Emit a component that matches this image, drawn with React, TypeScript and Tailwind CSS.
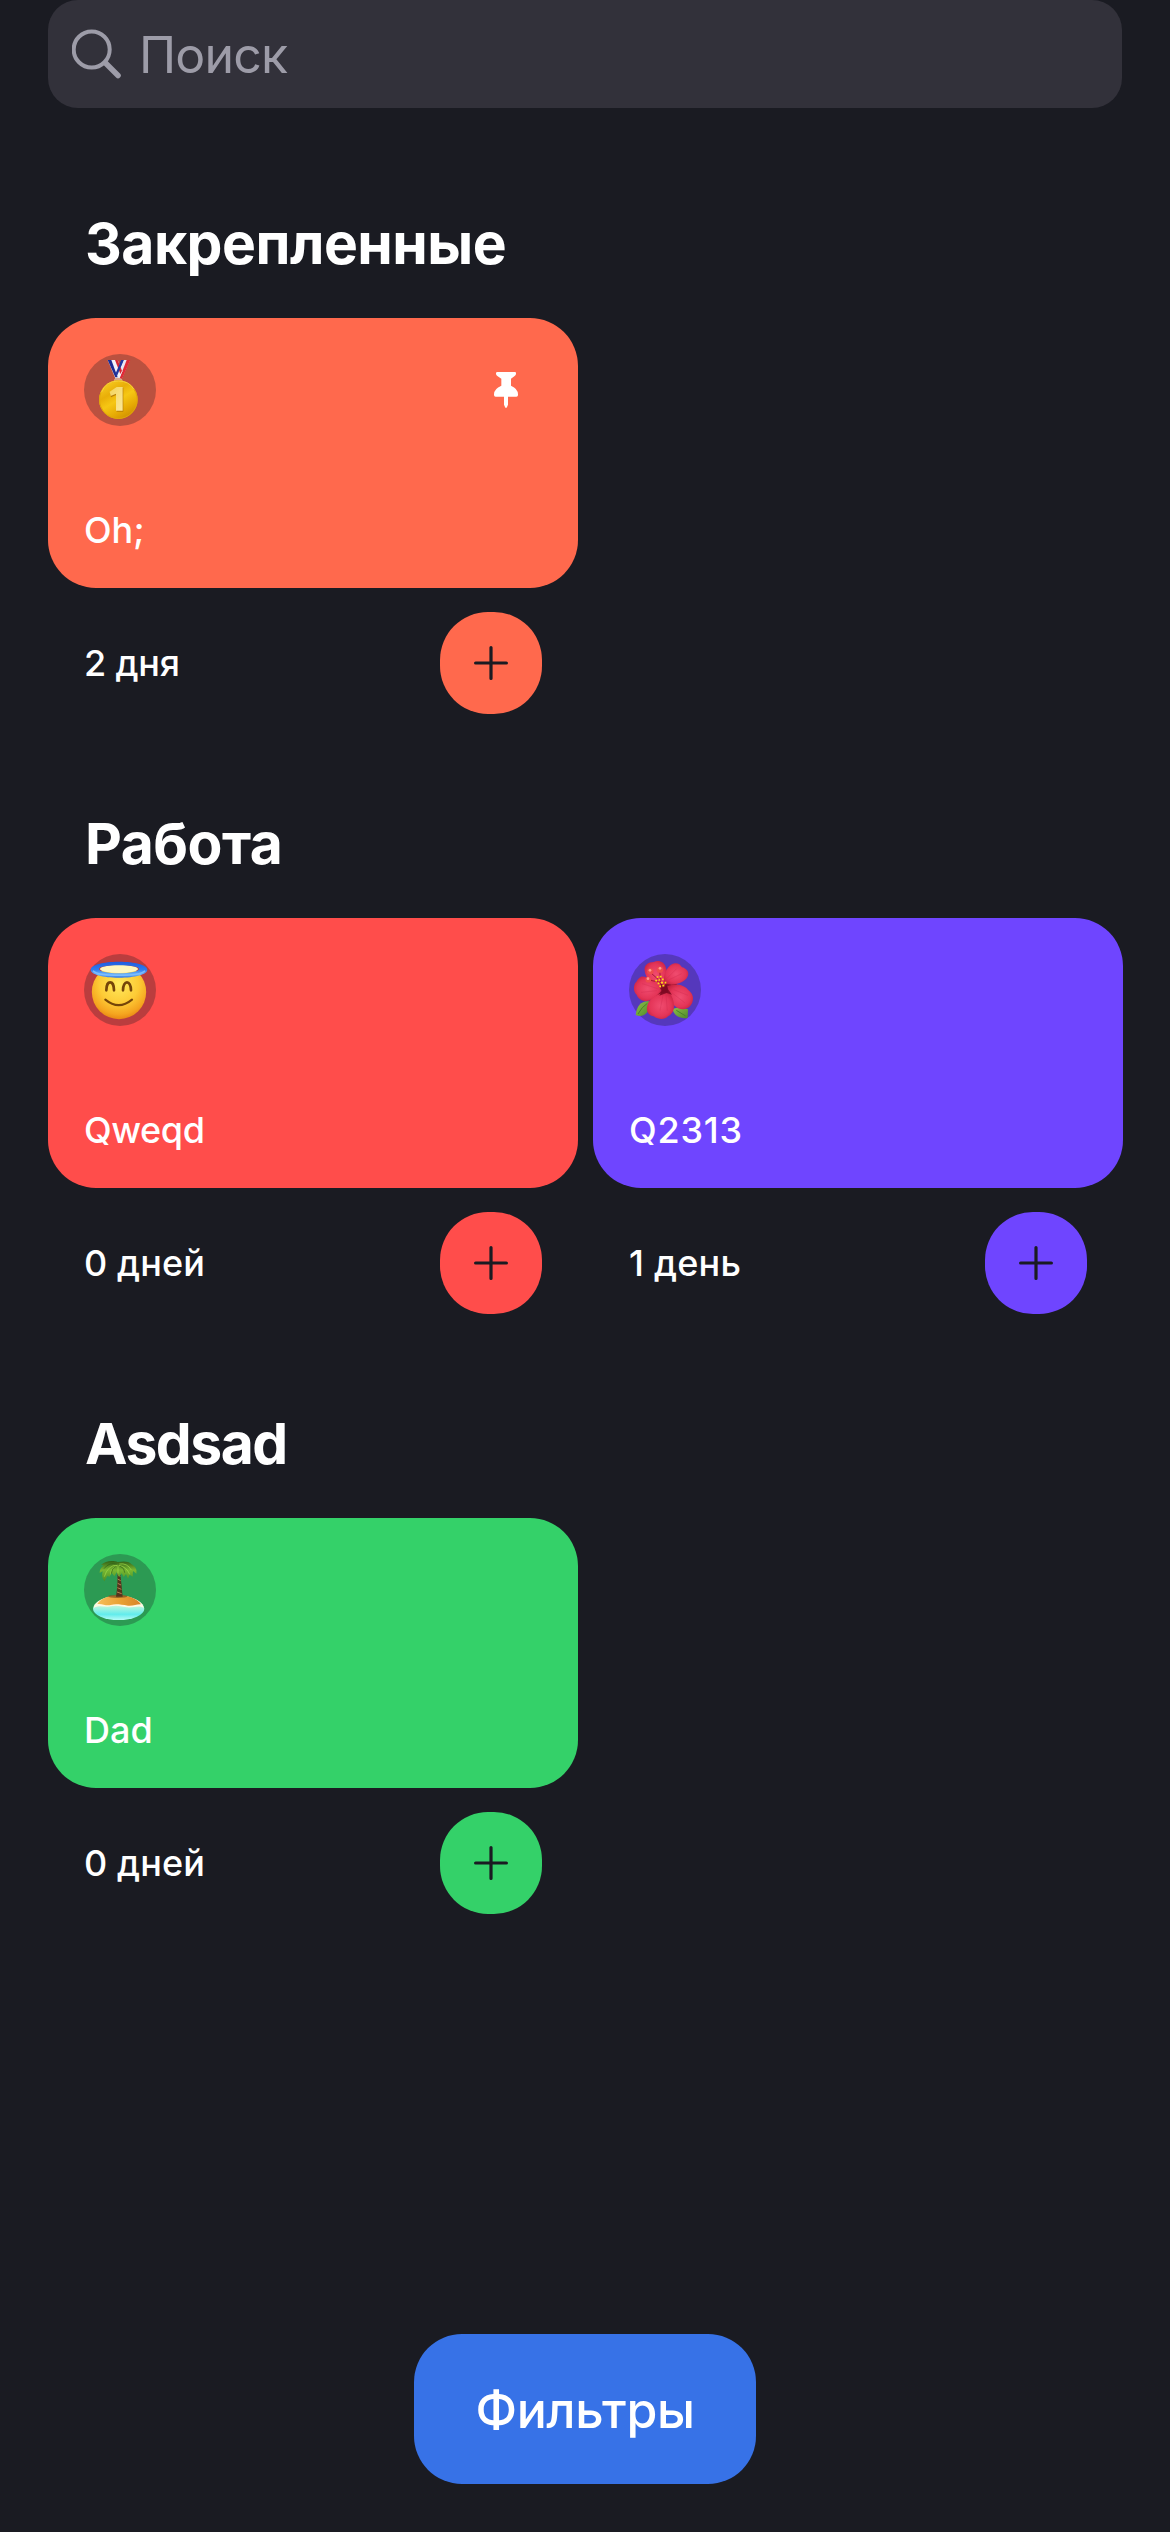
import type { ReactNode } from 'react';

function Medal() {
  return (
    <svg viewBox="42 42 216 216" className="size-[72px] overflow-visible">
      <defs>
        <linearGradient id="gold" x1="0.2" y1="0" x2="0.8" y2="1">
          <stop offset="0" stopColor="#f8ce22" />
          <stop offset="0.3" stopColor="#e9ae08" />
          <stop offset="0.5" stopColor="#f6c714" />
          <stop offset="0.75" stopColor="#e6aa04" />
          <stop offset="1" stopColor="#c98a00" />
        </linearGradient>
        <linearGradient id="digit" x1="0" y1="0" x2="1" y2="1">
          <stop offset="0" stopColor="#f4d45c" />
          <stop offset="1" stopColor="#fbe89a" />
        </linearGradient>
      </defs>
      <path d="M154 60h26l-25 57h-18z" fill="#e8e8f4" />
      <path d="M170 60h11l-25 57h-8z" fill="#e02a36" />
      <path d="M154 60h7l-22 50-5-8z" fill="#2438a0" />
      <path d="M113 60h30l14 34-10 23h-10z" fill="#f3f3fa" />
      <path d="M113 60h11l19 52h-7z" fill="#1e2c92" />
      <path d="M135 60h8l13 32-5 10z" fill="#d82835" />
      <path d="M154 60h7l-20 48-5-6z" fill="#2438a0" />
      <path d="M133 117q12-8 23 0l2 8h-27z" fill="#d9a58c" />
      <circle cx="145" cy="179" r="58" fill="url(#gold)" />
      <circle cx="145" cy="179" r="56.5" fill="none" stroke="#e0a60a" strokeWidth="3" />
      <path d="M94 157q14-34 51-34 32 0 46 24" fill="none" stroke="#ffe04e" strokeWidth="3" opacity=".7" />
      <path d="M139 141h20v72h-20v-51l-17 8-3-15z" fill="#b97f06" transform="translate(1 2)" />
      <path d="M140 141h18v71h-20v-51l-16 7-3-13z" fill="url(#digit)" />
    </svg>
  );
}

function HaloFace() {
  return (
    <svg viewBox="42 42 216 216" className="size-[72px] overflow-visible">
      <defs>
        <radialGradient id="face" cx="0.5" cy="0.35" r="0.66">
          <stop offset="0" stopColor="#ffe95c" />
          <stop offset="0.55" stopColor="#fdcb36" />
          <stop offset="0.85" stopColor="#f5a51f" />
          <stop offset="1" stopColor="#e88413" />
        </radialGradient>
        <linearGradient id="halo" x1="0" y1="0" x2="0" y2="1">
          <stop offset="0" stopColor="#1e5be0" />
          <stop offset="0.5" stopColor="#2f7bee" />
          <stop offset="0.8" stopColor="#6db4fb" />
          <stop offset="1" stopColor="#3478e6" />
        </linearGradient>
      </defs>
      <circle cx="147" cy="156" r="81.500" fill="url(#face)" />
      <ellipse cx="147" cy="87" rx="57" ry="12" fill="#fff6bd" />
      <path
        fillRule="evenodd"
        d="M147 65c48 0 85 10 85 24s-37 24-85 24-85-10-85-24 37-24 85-24zm0 11c-34 0-60 4-60 11s26 13 60 13 60-6 60-13-26-11-60-11z"
        fill="url(#halo)"
      />
      <path d="M69 92c10 10 43 14 78 14s68-4 78-14" fill="none" stroke="#7cbdfc" strokeWidth="4" />
      <path d="M109 151c0-32 23-32 23 0M159 151c0-32 24-32 24 0" fill="none" stroke="#754509" strokeWidth="8" strokeLinecap="round" />
      <path d="M106 179q40 33 80 0" fill="none" stroke="#754509" strokeWidth="6.500" strokeLinecap="round" />
    </svg>
  );
}

function Hibiscus() {
  return (
    <svg viewBox="57 42 216 216" className="size-[72px] overflow-visible">
      <defs>
        <radialGradient id="petal" cx="0.5" cy="0.5" r="0.6">
          <stop offset="0" stopColor="#f04c70" />
          <stop offset="0.65" stopColor="#e43558" />
          <stop offset="1" stopColor="#c4203e" />
        </radialGradient>
        <linearGradient id="leaf" x1="0" y1="0" x2="1" y2="1">
          <stop offset="0" stopColor="#8fc14a" />
          <stop offset="1" stopColor="#4e8a28" />
        </linearGradient>
      </defs>
      <path d="M118 184c-22-3-38 12-41 41 20 8 37-2 43-27z" fill="url(#leaf)" />
      <path d="M84 222q12-22 28-32" stroke="#49812a" strokeWidth="3" fill="none" />
      <path d="M187 207c6 20 22 30 46 27l1-26-25-7z" fill="url(#leaf)" />
      <path d="M199 211l28 17" stroke="#49812a" strokeWidth="3" fill="none" />
      <path d="M124 112l40-8 36 28 2 50-56 6-26-14z" fill="#8f0f2a" />
      <path d="M104 92c-3-16 11-26 27-26 16-7 32 0 36 15 8 18 4 46-7 64-26-6-54-28-56-53z" fill="url(#petal)" />
      <path d="M162 130c-4-28 12-56 32-60 11-1 17 4 22 12 11 2 20 11 19 21-3 20-28 30-50 31z" fill="url(#petal)" />
      <path d="M154 152c-10-24-38-44-61-42-10 5-11 13-18 20-6 15-3 27 5 34 4 12 16 19 29 19 20-2 34-18 45-31z" fill="url(#petal)" />
      <path d="M172 139c24-11 51-4 62 10 12 9 18 21 14 34-3 16-17 25-31 25-26-1-43-31-45-69z" fill="url(#petal)" />
      <path d="M178 158c-22-3-61 13-66 39-5 17 4 29 19 32 14 11 34 11 43 0 12-7 18-16 18-31 0-17-5-29-14-40z" fill="url(#petal)" />
      <path d="M150 128q16 12 20 6l4 14 12 16-16-5-22 8 8-15z" fill="#7b0821" opacity=".85" />
      <path d="M159 165l-9 47M168 166l4 46M185 158l39 30M191 149l43 17M140 152l-47 5M143 146l-46-15M171 115l29-29M178 119l37-18" stroke="#c9244b" strokeWidth="1.500" opacity=".55" />
      <path d="M121 97l33 30M149 92l3 31M117 120l33 7" stroke="#a81634" strokeWidth="3" />
      <g fill="#ee4c4c">
        <circle cx="121" cy="94" r="9.500" />
        <circle cx="150" cy="89" r="9.500" />
        <circle cx="115" cy="119" r="8.500" />
      </g>
      <g fill="#ff9c92">
        <circle cx="120" cy="91" r="4" />
        <circle cx="150" cy="85" r="4" />
        <circle cx="114" cy="116" r="4" />
      </g>
      <path
        d="M140 111h5M149 110h6M136 122h5M145 120h6M156 118h5M143 130h5M153 128h6M164 128h5M148 139h5M157 137h6"
        stroke="#ffdc16"
        strokeWidth="5"
      />
    </svg>
  );
}

function Island() {
  return (
    <svg viewBox="42 42 216 216" className="size-[72px] overflow-visible">
      <defs>
        <linearGradient id="sand" x1="0" y1="0" x2="1" y2="0">
          <stop offset="0" stopColor="#f6bd5c" />
          <stop offset="0.55" stopColor="#e8a033" />
          <stop offset="1" stopColor="#d8832a" />
        </linearGradient>
        <linearGradient id="sea" x1="0" y1="0" x2="0" y2="1">
          <stop offset="0" stopColor="#fff3c8" />
          <stop offset="0.35" stopColor="#c5f7dc" />
          <stop offset="0.75" stopColor="#62ecec" />
          <stop offset="1" stopColor="#b6fbf6" />
        </linearGradient>
        <linearGradient id="frond" x1="0" y1="0" x2="0" y2="1">
          <stop offset="0" stopColor="#315f16" />
          <stop offset="0.45" stopColor="#78b832" />
          <stop offset="1" stopColor="#4b8d24" />
        </linearGradient>
      </defs>
      <ellipse cx="146" cy="206" rx="77" ry="34" fill="url(#sea)" />
      <path d="M71 204c2-20 32-37 75-37s73 18 75 36c-16-9-32 1-50-1-23-4-29-7-48-3-18 5-30-6-52 5z" fill="#fff8e2" />
      <path d="M82 192c10-17 35-26 66-26 30 0 55 12 65 27-13-1-24 6-39 4-22-3-36-6-52-2-16 3-24-5-40-3z" fill="url(#sand)" />
      <ellipse cx="143" cy="169" rx="29" ry="5" fill="#7b4e20" opacity=".7" />
      <path d="M141 87l8-1c3 21 5 42 9 84h-20c5-31 6-56 3-83z" fill="#54341c" />
      <path d="M143 104l8 5M143 117l9 5M143 130l10 5M142 143l12 5M141 156l14 5" stroke="#b68151" strokeWidth="3" />
      <path
        d="M143 66c-14-6-38-4-50 9 5 0 7 1 7 2-7 6-12 13-11 22l9-5c-3 11-2 21 5 30l9-16 7 2 6-12 8 11 7-12 7 14 8-11 6 11 7-9 6 14 5-12 9 6 1-17 10 8c3-12-3-22-15-29-9-8-20-9-41-6z"
        fill="url(#frond)"
      />
      <path d="M142 75q-29 1-39 35M142 76q-20 6-20 27M147 76q23 5 32 27M148 72q23-4 36 18M144 76v25" stroke="#a0da48" strokeWidth="3" fill="none" opacity=".7" />
      <path d="M142 73q-24-8-40 13M150 78q15 7 14 20M137 78q-12 7-13 23" stroke="#285817" strokeWidth="3" fill="none" opacity=".6" />
    </svg>
  );
}

function Pin() {
  return (
    <svg viewBox="0 0 72 108" className="h-[36px] w-[24px]" fill="#fff">
      <path d="M10 0H63Q66 0 66 4V5Q66 9 62 12L51 20V41Q72 50 72 67V69Q72 74 67 74H42V98L39 105Q36 111 33 105L30 98V74H5Q0 74 0 69V67Q0 50 22 41V20L10 12Q6 9 6 5V4Q6 0 10 0Z" />
    </svg>
  );
}

type Item = {
  name: string;
  nameSpacing: string;
  days: string;
  daysSpacing: string;
  color: string;
  emoji: ReactNode;
  pinned?: boolean;
};

function Card({ item }: { item: Item }) {
  return (
    <div>
      <div className={`flex h-[270px] flex-col justify-between rounded-[48px] px-9 pt-9 pb-[34px] ${item.color}`}>
        <div className="flex items-center justify-between">
          <div className="size-[72px] rounded-full bg-[#1a1b22]/30">{item.emoji}</div>
          {item.pinned && (
            <div className="mr-6">
              <Pin />
            </div>
          )}
        </div>
        <div className={`text-[36px] leading-[48px] font-medium ${item.nameSpacing}`}>{item.name}</div>
      </div>
      <div className="mt-6 flex h-[102px] items-center justify-between px-9">
        <div className={`text-[36px] leading-[48px] font-medium ${item.daysSpacing}`}>{item.days}</div>
        <button className={`flex size-[102px] items-center justify-center rounded-[48px] ${item.color}`}>
          <svg viewBox="0 0 34 34" className="size-[34px]" fill="none" stroke="#1a1b22" strokeWidth="3.2" strokeLinecap="round">
            <path d="M17 1.600v30.800M1.600 17h30.800" />
          </svg>
        </button>
      </div>
    </div>
  );
}

const sections: { title: string; spacing: string; items: Item[] }[] = [
  {
    title: 'Закрепленные',
    spacing: 'tracking-[-0.5px]',
    items: [
      { name: 'Oh;', nameSpacing: 'tracking-normal', days: '2 дня', daysSpacing: 'tracking-[-0.2px]', color: 'bg-[#ff694d]', emoji: <Medal />, pinned: true },
    ],
  },
  {
    title: 'Работа',
    spacing: 'tracking-[-0.5px]',
    items: [
      { name: 'Qweqd', nameSpacing: 'tracking-[-0.4px]', days: '0 дней', daysSpacing: 'tracking-[0.1px]', color: 'bg-[#ff4d4b]', emoji: <HaloFace /> },
      { name: 'Q2313', nameSpacing: 'tracking-[0.8px]', days: '1 день', daysSpacing: 'tracking-[0.2px]', color: 'bg-[#6f45ff]', emoji: <Hibiscus /> },
    ],
  },
  {
    title: 'Asdsad',
    spacing: 'tracking-[-1.5px]',
    items: [
      { name: 'Dad', nameSpacing: 'tracking-normal', days: '0 дней', daysSpacing: 'tracking-[0.1px]', color: 'bg-[#34d169]', emoji: <Island /> },
    ],
  },
];

export default function App() {
  return (
    <div className="flex h-[2532px] w-[1170px] flex-col overflow-hidden bg-[#1a1b22] pb-12 font-['Inter',sans-serif] text-white">
      <div className="mx-12 flex h-[108px] shrink-0 items-center rounded-[30px] bg-[#32313a] pl-6 text-[#9d9ca8]">
        <svg viewBox="0 0 50 50" className="size-[50px] shrink-0" fill="none" stroke="currentColor" strokeLinecap="round">
          <circle cx="19.700" cy="20.500" r="18" strokeWidth="4" />
          <path d="M33.500 34L46 46.500" strokeWidth="5.500" />
        </svg>
        <span className="ml-[17px] pt-0.5 text-[50px] leading-[60px] tracking-[-0.8px]">Поиск</span>
      </div>

      <div className="mt-[98px] flex flex-col gap-[84px]">
        {sections.map((section) => (
          <section key={section.title} className="h-[516px]">
            <h2 className={`mb-[37px] ml-[85px] text-[57px] leading-[75px] font-bold ${section.spacing}`}>{section.title}</h2>
            <div className="mx-12 grid grid-cols-[530px_530px] gap-[15px]">
              {section.items.map((item) => (
                <Card key={item.name} item={item} />
              ))}
            </div>
          </section>
        ))}
      </div>

      <button className="mt-auto flex h-[150px] w-[342px] shrink-0 items-center justify-center self-center rounded-[48px] bg-[#3772e7] pt-0.5 text-[50px] font-medium tracking-[-0.4px]">
        Фильтры
      </button>
    </div>
  );
}
